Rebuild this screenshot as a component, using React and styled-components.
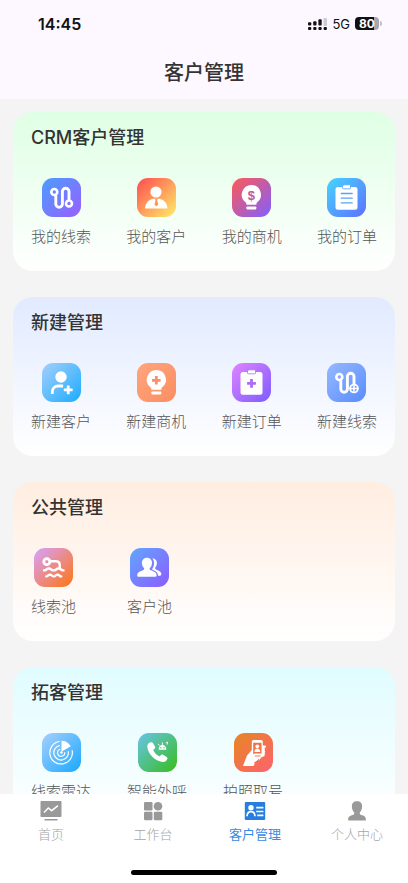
import React from "react";
import styled, { createGlobalStyle } from "styled-components";

const GlobalStyle = createGlobalStyle`
* {
    box-sizing: border-box;
}
body {
    margin: 0;
    font-family: "Noto Sans CJK SC", "Noto Sans", sans-serif;
    color: #333;
}
button {
    font-family: inherit;
}
`

/* ---------- icons ---------- */

const Route = ({ plus }) => (
    <Glyph viewBox="0 0 39 39">
        <circle cx="12.300" cy="14" r="3" strokeWidth="2.600" />
        <path strokeWidth="2.900" d="M13.800 18V26a3.300 3.300 0 0 0 6.600 0V13.600a3.300 3.300 0 0 1 6.600 0V21" />
        <circle cx="27" cy="25.500" r={plus ? 3.900 : 3} strokeWidth={plus ? 1.900 : 2.600} />
        {plus && <path strokeWidth="1.600" strokeLinecap="butt" d="M27 22.500v6M24 25.500h6" />}
    </Glyph>
);

const Person = () => (
    <Glyph viewBox="0 0 39 39">
        <circle cx="19" cy="14" r="5.600" fill="#fff" stroke="none" />
        <path fill="#fff" stroke="none" d="M8 30.600c.3-5.600 3.700-9.200 9-9.800h5c5 .8 8.200 4.400 8.400 9.800z" />
        <path fill="#ff9650" stroke="none" d="M18 20.600h2.700l-.5 2 1 4-1.900 2-1.800-2 1-4z" />
    </Glyph>
);

const Bulb = ({ plus }) => (
    <Glyph viewBox="0 0 39 39">
        <path fill="#fff" stroke="none" d="M19.300 7a9.700 9.700 0 0 1 6.200 17.100c-1 .8-1 1.600-1.200 2.700h-9.800c-.2-1.100-.3-1.900-1.300-2.700A9.700 9.700 0 0 1 19.300 7z" />
        <rect x="14.400" y="28.400" width="9.900" height="3" rx=".8" fill="#fff" stroke="none" />
        {plus
            ? <path stroke="#fb8f66" strokeWidth="2.800" strokeLinecap="butt" d="M19.300 13v8.600M15 17.300h8.600" />
            : <text x="19.300" y="22" textAnchor="middle" fontFamily="Liberation Sans" fontSize="13" fontWeight="700" fill="#bd589c" stroke="none">$</text>}
    </Glyph>
);

const Clipboard = ({ plus, tint }) => (
    <Glyph viewBox="0 0 39 39">
        <rect x="8.500" y="9" width="22" height="22.700" rx="2.500" fill="#fff" stroke="none" />
        <rect x="15.500" y="6.800" width="8" height="4" rx=".8" fill="#fff" stroke={tint} strokeWidth=".8" />
        {plus
            ? <path stroke={tint} strokeWidth="2.800" strokeLinecap="butt" d="M19.500 16v8.800M15.100 20.400h8.800" />
            : <path stroke={tint} strokeWidth="1.300" d="M14.300 15.500h10.900M14.300 20.200h10.900M14.300 24.900h10.900" />}
    </Glyph>
);

const PersonAdd = () => (
    <Glyph viewBox="0 0 39 39">
        <circle cx="19" cy="14" r="5.700" fill="#fff" stroke="none" />
        <path strokeWidth="2.800" strokeLinecap="butt" d="M10.300 31v-2c0-3.500 2.400-6 5.800-6h5M26.200 22.400v8.800M21.800 26.800h8.800" />
    </Glyph>
);

const Swimmer = () => (
    <Glyph viewBox="0 0 39 39">
        <circle cx="12.800" cy="13.700" r="3" strokeWidth="2.800" />
        <path strokeWidth="2.400" d="M16.500 13.200h5.500c2.600 0 3.600 1.200 3.700 3.500l.1 3" />
        <path strokeWidth="2.400" d="M10 22.400c2.400 0 2.400-1.900 4.800-1.900s2.400 1.900 4.900 1.900 2.400-1.900 4.900-1.900 2.400 1.900 4.900 1.900" />
        <path strokeWidth="2.400" d="M12.300 28.400c1.900 0 1.900-1.800 3.700-1.800s1.900 1.800 3.700 1.800 1.900-1.800 3.800-1.800 1.900 1.800 3.700 1.800" />
    </Glyph>
);

const People = () => (
    <Glyph viewBox="0 0 39 39">
        <path fill="#fff" stroke="none" d="M17 9.700c3 0 5 2.200 5 5.200 0 2.300-.9 4-2.300 5.100-.3 1.500.3 2 2 2.600 3.400 1.200 4.900 2.300 4.900 4.600 0 1.100-.5 1.600-1.600 1.600H8.800c-1.100 0-1.600-.5-1.600-1.600 0-2.300 1.700-3.400 4.900-4.600 1.700-.6 2.200-1.100 2-2.600-1.300-1.100-2.200-2.800-2.200-5.100 0-3 2.100-5.200 5.100-5.200z" />
        <path fill="#fff" stroke="none" d="M22.200 10.300c3 .1 4.700 2 4.700 4.700 0 1.900-.6 3.300-1.600 4.400-.3 1.400.2 1.900 1.700 2.500 2.800 1.100 4.300 2.200 4.300 4.200 0 1.200-.5 1.700-1.500 1.700h-1.700c-.1-2.900-1.800-4.500-4.900-5.700-.9-.3-1.200-.8-.9-1.400 1.200-1.500 1.800-3.400 1.800-5.600 0-1.900-.6-3.500-1.900-4.800z" />
    </Glyph>
);

const Radar = () => (
    <Glyph viewBox="0 0 39 39">
        <path strokeWidth="1.200" d="M17.300 8.500A11.300 11.300 0 1 0 30.200 17.600M17.500 12.600A7.300 7.300 0 1 0 26.300 18.500M18 16.300A3.600 3.600 0 1 0 22.800 19.500" />
        <path fill="#fff" stroke="none" d="M19.500 7.700c4 0 7.200 2 9.300 5.600L20.600 18l-1.100 1z" />
        <circle cx="19.500" cy="19.500" r="1.300" fill="#fff" stroke="none" />
    </Glyph>
);

const Call = () => (
    <Glyph viewBox="0 0 39 39">
        <path fill="#fff" stroke="none" d="M12.800 9.300c-2.300.5-3.700 2.200-3.500 4.700.7 7 7.700 14 15.200 15 2.200.3 4-.9 4.800-2.900.3-.8.100-1.500-.6-2l-3.700-2.400c-.8-.5-1.500-.4-2.100.3l-1.200 1.500c-3-1.300-5.200-3.500-6.500-6.500l1.400-1.200c.6-.6.8-1.200.5-2l-2.200-3.700c-.5-.7-1.100-1-2.100-.8z" />
        <path fill="#fff" stroke="none" d="M20.600 16.700c0-2.900 1.400-4.700 3.800-4.700s3.900 1.800 3.900 4.700z" />
        <path strokeWidth=".9" d="M24.400 12V9.800M21.200 12.200l-.8-1M28.300 9.600l1.300-.4-.4 2" />
        <circle cx="22.900" cy="14.700" r=".7" fill="#53bd70" stroke="none" />
        <circle cx="26" cy="14.700" r=".7" fill="#53bd70" stroke="none" />
    </Glyph>
);

const PhotoPhone = () => (
    <Glyph viewBox="0 0 39 39">
        <path fill="#fff" stroke="none" d="M9 33l4-10.500 4.800-5.500V9c0-1.300.6-2 1.800-2H27c1.200 0 1.800.7 1.800 2v3.400l2.400.2c1 .3 1 1.800 0 2.100l-1.300.3c1.300.1 1.500 1.900.3 2.200 1.200.2 1.300 1.900.2 2.200 1 .3.900 1.800-.2 2.100.8.3.8 1.500-.1 1.800l-2.300.8-2.700 3-3.300 1.300-2.300 4.600z" />
        <path fill="#f37045" stroke="none" d="M19.200 9.800h8.300v10.600h-7l-1.300 1z" />
        <circle cx="23.300" cy="13.300" r="1.900" fill="#fff" stroke="none" />
        <path fill="#fff" stroke="none" d="M20.400 19c0-2.400 1-3.600 2.900-3.600s2.900 1.200 2.900 3.600z" />
        <path stroke="#f66b50" strokeWidth=".9" d="M21.200 23h5M22.600 28.400l2.200-2M20.200 30l2.400-1.600" />
    </Glyph>
);

const HomeIcon = () => (
    <TabGlyph viewBox="0 0 22 22">
        <path fill="currentColor" d="M1.500 1h19c.6 0 1 .4 1 1v14c0 .6-.4 1-1 1h-19c-.6 0-1-.4-1-1V2c0-.6.4-1 1-1zM4.500 19h13v1.500h-13z" />
        <path fill="none" stroke="#fff" strokeWidth="1.500" d="M4 12.500L8.300 8l3.300 2.700L18 5.600" />
    </TabGlyph>
);

const WorkIcon = () => (
    <TabGlyph viewBox="0 0 22 22">
        <g fill="currentColor">
            <rect x="2" y="2" width="8.500" height="8.500" rx="1.200" />
            <circle cx="16" cy="6.200" r="4.300" />
            <rect x="2" y="11.800" width="8.500" height="8.500" rx="1.200" />
            <rect x="11.800" y="11.800" width="8.500" height="8.500" rx="1.200" />
        </g>
    </TabGlyph>
);

const CustomerIcon = () => (
    <TabGlyph viewBox="0 0 22 22">
        <rect x=".8" y="2" width="20.400" height="18" rx="1" fill="currentColor" />
        <circle cx="7" cy="7.700" r="2.700" fill="#fff" />
        <path fill="none" stroke="#fff" strokeWidth="1.700" d="M3 16.200c.2-3 1.500-4.500 4-4.500s3.900 1.500 4 4.500M12.200 7.600h7.200M12.200 11.500h7.200M13.200 15.300h6.200" />
    </TabGlyph>
);

const MeIcon = () => (
    <TabGlyph viewBox="0 0 22 22">
        <path fill="currentColor" d="M11 1.300c3.500 0 5.300 2 5.100 5.400-.1 2.500-.9 4.400-2.300 5.700-.3 1.500.2 2.100 1.800 2.700 2.800 1 4.200 1.700 4.200 4v1.500H2.200v-1.500c0-2.300 1.500-3 4.200-4 1.600-.6 2.100-1.200 1.800-2.700-1.400-1.300-2.200-3.200-2.300-5.700C5.700 3.300 7.500 1.300 11 1.300z" />
    </TabGlyph>
);

const Signal = () => (
    <svg width="19" height="12" viewBox="0 0 19 12" aria-hidden="true">
        <path fill="#cfcad3" d="M16.500 0h1.500q1 0 1 1v7h-3.500V1q0-1 1-1z" />
        <g fill="#111">
            <rect x="0" y="4.300" width="3.300" height="3.300" rx="1" />
            <rect x="5.200" y="3.300" width="3.300" height="4.300" rx="1" />
            <rect x="10.400" y="1.300" width="3.300" height="6.300" rx="1" />
            <rect x="0" y="8.900" width="3.300" height="3" rx="1" />
            <rect x="5.200" y="8.900" width="3.300" height="3" rx="1" />
            <rect x="10.400" y="8.900" width="3.300" height="3" rx="1" />
            <rect x="15.600" y="8.900" width="3.300" height="3" rx="1" />
        </g>
    </svg>
);

/* ---------- data ---------- */

const sections = [
    {
        title: "CRM客户管理",
        tone: "#dfffe4",
        items: [
            { label: "我的线索", from: "#4b9dff", to: "#985fff", icon: <Route /> },
            { label: "我的客户", from: "#ff4a50", to: "#ffef66", icon: <Person /> },
            { label: "我的商机", from: "#ff5a55", to: "#815fff", icon: <Bulb /> },
            { label: "我的订单", from: "#46d5ff", to: "#5e70ff", icon: <Clipboard tint="#52a4fb" /> },
        ],
    },
    {
        title: "新建管理",
        tone: "#e1eaff",
        items: [
            { label: "新建客户", from: "#a5cffc", to: "#1bacff", icon: <PersonAdd /> },
            { label: "新建商机", from: "#ffa57d", to: "#fb8d62", icon: <Bulb plus /> },
            { label: "新建订单", from: "#e184ff", to: "#7c5cff", icon: <Clipboard plus tint="#ac6cf5" /> },
            { label: "新建线索", from: "#97b9fc", to: "#588cff", icon: <Route plus /> },
        ],
    },
    {
        title: "公共管理",
        tone: "#ffede0",
        gap: 51,
        items: [
            { label: "线索池", from: "#d6a2ff", to: "#ff7412", icon: <Swimmer /> },
            { label: "客户池", from: "#62a6ff", to: "#8c5cff", icon: <People /> },
        ],
    },
    {
        title: "拓客管理",
        tone: "#e0fcff",
        gap: 36,
        items: [
            { label: "线索雷达", from: "#a8cffc", to: "#18a9ff", icon: <Radar /> },
            { label: "智能外呼", from: "#68c4e8", to: "#37bd1d", icon: <Call /> },
            { label: "拍照取号", from: "#e58622", to: "#ff6270", icon: <PhotoPhone /> },
        ],
    },
];

const tabs = [
    { label: "首页", icon: <HomeIcon /> },
    { label: "工作台", icon: <WorkIcon /> },
    { label: "客户管理", icon: <CustomerIcon />, active: true },
    { label: "个人中心", icon: <MeIcon /> },
];

function App() {
    return (
        <Container>
            <GlobalStyle />
            <Header>
                <StatusBar>
                    <Time>14:45</Time>
                    <StatusRight>
                        <Signal />
                        <Network>5G</Network>
                        <Battery>80</Battery>
                    </StatusRight>
                </StatusBar>
                <PageTitle>客户管理</PageTitle>
            </Header>

            <Main>
                {sections.map((section) => (
                    <Card key={section.title} $tone={section.tone}>
                        <h2>{section.title}</h2>
                        <Entries $gap={section.gap}>
                            {section.items.map((item) => (
                                <Entry key={item.label} type="button">
                                    <IconBox $from={item.from} $to={item.to}>{item.icon}</IconBox>
                                    <span>{item.label}</span>
                                </Entry>
                            ))}
                        </Entries>
                    </Card>
                ))}
            </Main>

            <Footer>
                <TabBar>
                    {tabs.map((tab) => (
                        <Tab key={tab.label} href="#" $active={tab.active} aria-current={tab.active ? "page" : undefined}>
                            {tab.icon}
                            <span>{tab.label}</span>
                        </Tab>
                    ))}
                </TabBar>
                <HomeIndicator />
            </Footer>
        </Container>
    );
}

const Container = styled.div`
display: flex;
flex-direction: column;
height: 100vh;
background: #f4f4f4;
`

const Header = styled.header`
flex: none;
padding-bottom: 12px;
background: #fdf7ff;
`

const StatusBar = styled.div`
display: flex;
justify-content: space-between;
align-items: center;
height: 47px;
padding: 0 29px 0 38px;
font-family: Inter, "Liberation Sans", sans-serif;
color: #111;
`

const Time = styled.span`
font-size: 16px;
font-weight: 600;
`

const StatusRight = styled.div`
display: flex;
align-items: center;
gap: 5px;
`

const Network = styled.span`
font-size: 13px;
`

const Battery = styled.span`
position: relative;
width: 24px;
height: 13px;
border-radius: 4px;
background: linear-gradient(90deg, #111 80%, #aaa6ad 80%);
color: #fff;
font-size: 12px;
font-weight: 700;
line-height: 13px;
text-align: center;
&:after{
    content: '';
    position: absolute;
    right: -3px;
    top: 4px;
    width: 2px;
    height: 5px;
    border-radius: 0 2px 2px 0;
    background: #c4bfc8;
}
`

const PageTitle = styled.h1`
margin: 0;
padding-top: 10px;
font-size: 20px;
font-weight: 500;
line-height: 30px;
text-align: center;
`

const Main = styled.main`
flex: 1;
min-height: 0;
display: flex;
flex-direction: column;
gap: 26px;
padding: 13px;
overflow-y: auto;
scrollbar-width: none;
`

const Card = styled.section`
flex: none;
padding: 16px 18px 25px;
border-radius: 20px;
background: linear-gradient(180deg, ${(props) => props.$tone}, #fff);
& h2{
    margin: 0 0 30px;
    font-family: Inter, "Noto Sans CJK SC", sans-serif;
    font-size: 18px;
    font-weight: 500;
    line-height: 20px;
}
`

const Entries = styled.div`
display: flex;
justify-content: ${(props) => (props.$gap ? "flex-start" : "space-between")};
gap: ${(props) => props.$gap || 0}px;
`

const Entry = styled.button`
display: flex;
flex-direction: column;
align-items: center;
gap: 9px;
padding: 0;
border: 0;
background: none;
color: #555;
font-size: 15px;
font-weight: 300;
line-height: 20px;
cursor: pointer;
`

const IconBox = styled.span`
display: block;
width: 39px;
height: 39px;
border-radius: 11px;
background: linear-gradient(135deg, ${(props) => props.$from}, ${(props) => props.$to});
`

const Glyph = styled.svg`
display: block;
width: 100%;
height: 100%;
fill: none;
stroke: #fff;
stroke-linecap: round;
stroke-linejoin: round;
`

const Footer = styled.footer`
flex: none;
padding-bottom: 8px;
background: #fff;
`

const TabBar = styled.nav`
display: grid;
grid-template-columns: repeat(4, 1fr);
padding: 6px 0 26px;
`

const Tab = styled.a`
display: flex;
flex-direction: column;
align-items: center;
gap: 2px;
color: ${(props) => (props.$active ? "#267fdf" : "#999")};
font-size: 13px;
font-weight: ${(props) => (props.$active ? 400 : 300)};
line-height: 20px;
text-decoration: none;
& span{
    color: ${(props) => (props.$active ? "#3a8be3" : "#a5a5a5")};
}
`

const TabGlyph = styled.svg`
width: 22px;
height: 22px;
`

const HomeIndicator = styled.div`
width: 36%;
height: 5px;
margin: 0 auto;
border-radius: 3px;
background: #000;
`

export default App;
